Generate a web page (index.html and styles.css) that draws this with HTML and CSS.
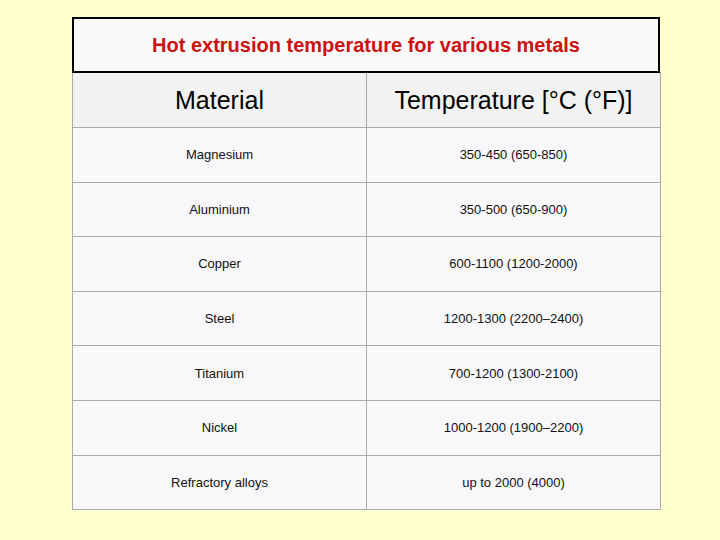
FILE: index.html
```html
<!DOCTYPE html>
<html lang="en">
<head>
    <meta charset="UTF-8">
    <title>Hot extrusion temperature</title>
    <link rel="stylesheet" href="styles.css">
</head>
<body>

<div class="slide">
    <div class="caption">Hot extrusion temperature for various metals</div>
    <table class="temps">
        <thead>
            <tr>
                <th>Material</th>
                <th>Temperature [°C (°F)]</th>
            </tr>
        </thead>
        <tbody>
            <tr><td>Magnesium</td><td>350-450 (650-850)</td></tr>
            <tr><td>Aluminium</td><td>350-500 (650-900)</td></tr>
            <tr><td>Copper</td><td>600-1100 (1200-2000)</td></tr>
            <tr><td>Steel</td><td>1200-1300 (2200–2400)</td></tr>
            <tr><td>Titanium</td><td>700-1200 (1300-2100)</td></tr>
            <tr><td>Nickel</td><td>1000-1200 (1900–2200)</td></tr>
            <tr><td>Refractory alloys</td><td>up to 2000 (4000)</td></tr>
        </tbody>
    </table>
</div>

</body>
</html>
```

FILE: styles.css
```css
body {
    margin: 0;
    background: #ffffcc;
    font-family: "Liberation Sans", Arial, sans-serif;
}
.slide {
    width: 589px;
    margin: 17px 0 0 72px;
}
.caption {
    height: 52px;
    width: 584px;
    border: 2px solid #000;
    background: #fafafa;
    color: #cc1111;
    font-size: 20px;
    font-weight: bold;
    display: flex;
    align-items: center;
    justify-content: center;
    position: relative; /* leží přes horní okraj tabulky */
    z-index: 1;
}
.temps {
    width: 589px;
    border-collapse: collapse;
    margin-top: -1px;
    table-layout: fixed;
}
.temps th,
.temps td {
    border: 1px solid #aaaaaa;
    text-align: center;
    padding: 0;
    width: 50%;
}
.temps th {
    height: 54px;
    background: #f2f2f2;
    font-size: 25px;
    font-weight: normal;
    color: #000;
}
.temps td {
    height: 53.6px;
    background: #f8f8fa;
    font-size: 13px;
    color: #111;
}
```
